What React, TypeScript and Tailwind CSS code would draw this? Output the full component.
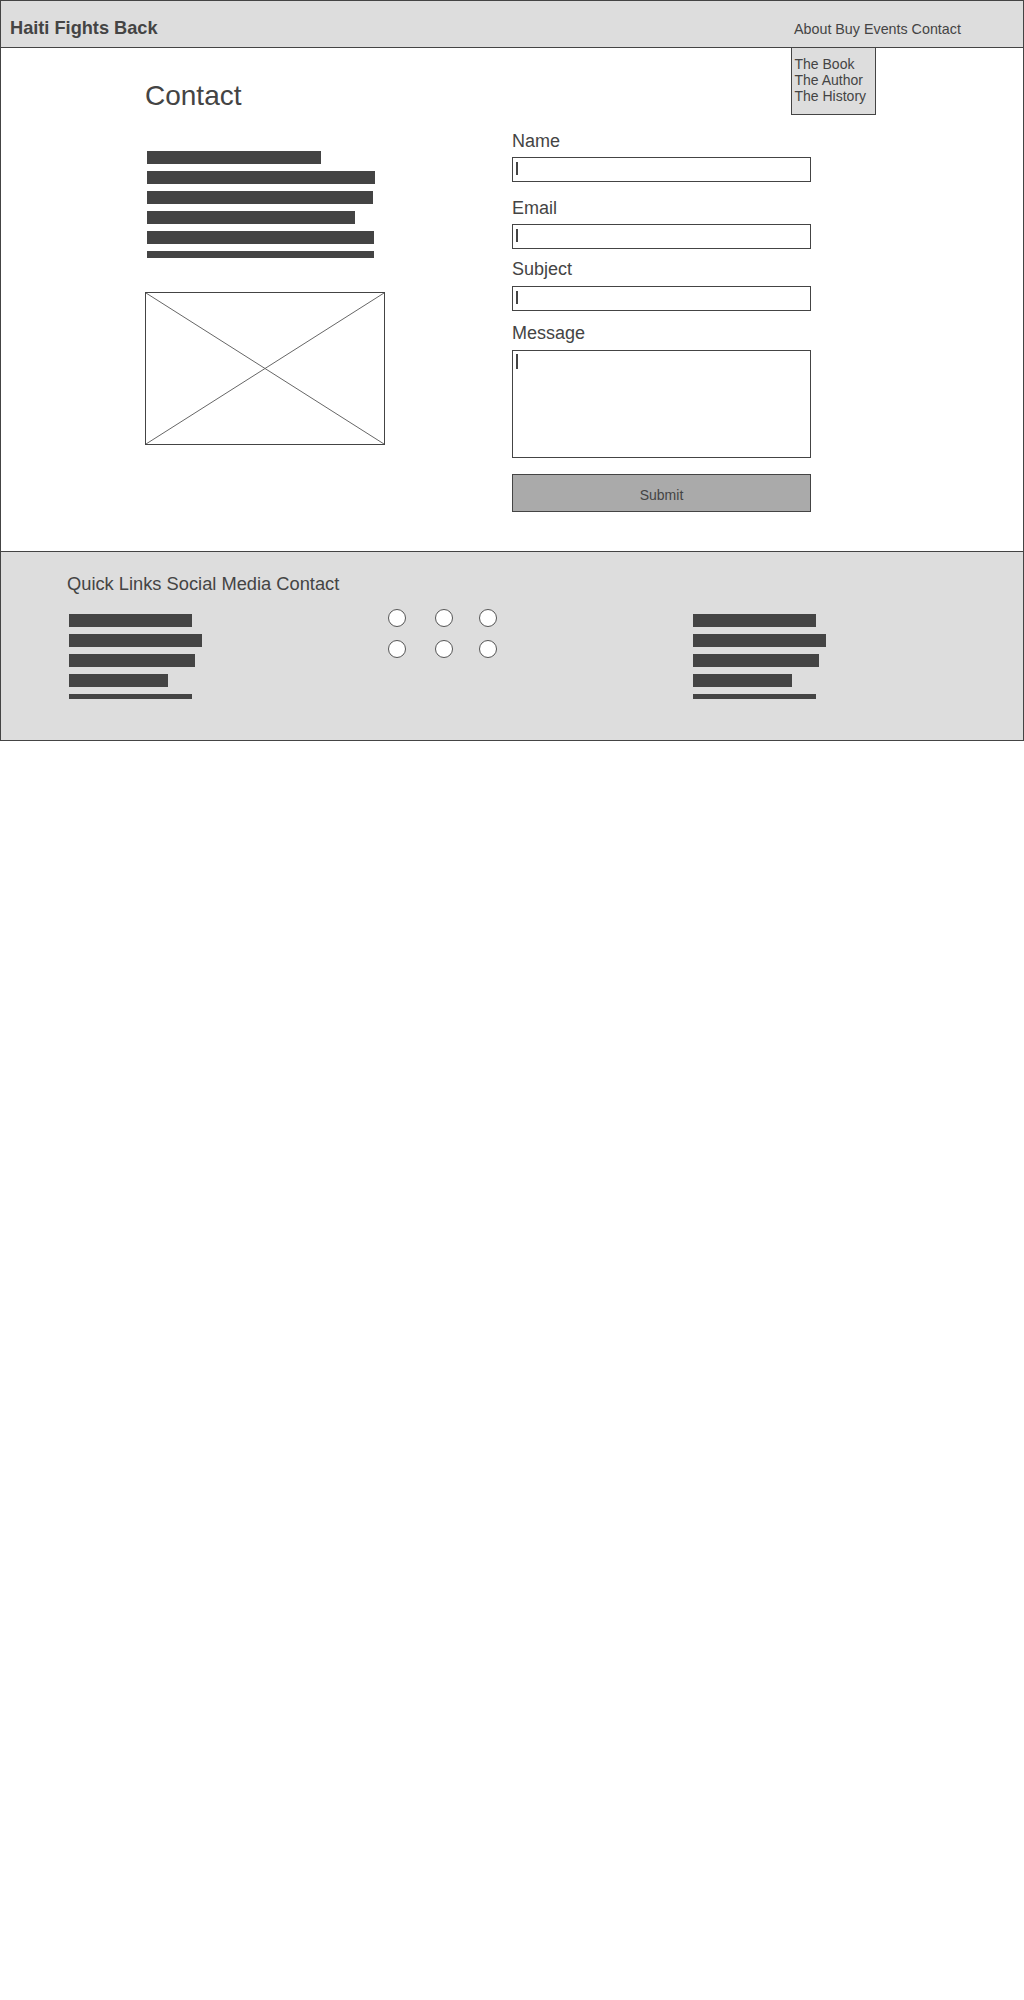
import React from "react";

const NAV = ["About", "Buy", "Events", "Contact"];
const SUBMENU = ["The Book", "The Author", "The History"];
const INTRO_BARS = [174, 228, 226, 208, 227];
const FOOTER_BARS = [123, 133, 126, 99];

const Caret = ({ tall = false }: { tall?: boolean }) => (
  <span className={`block w-[1.5px] bg-[#444] ${tall ? "h-[15px]" : "h-[13px]"}`} />
);

const Field = ({ label, className, inputClass }: { label: string; className: string; inputClass: string }) => (
  <>
    <label className={`text-[18px] leading-[21px] ${className}`}>{label}</label>
    <div className={`h-[25px] border border-[#444] bg-white pt-[4px] pl-[3px] ${inputClass}`}>
      <Caret />
    </div>
  </>
);

const BarList = ({ widths, last }: { widths: number[]; last: number }) => (
  <div className="flex flex-col gap-[7px]">
    {widths.map((w, i) => (
      <div key={i} className="h-[13px] bg-[#444]" style={{ width: w }} />
    ))}
    <div className="h-[5px] bg-[#444]" style={{ width: last }} />
  </div>
);

export default function App() {
  return (
    <div className="w-[1024px] border border-[#444] bg-white text-[#444] font-['Liberation_Sans',Arial,sans-serif]">
      {/* Header */}
      <header className="relative h-[47px] border-b border-[#444] bg-[#ddd] flex items-baseline pt-[17px]">
        <div className="w-[790px] shrink-0 pl-[9px] text-[18.2px] font-bold leading-[21px]">Haiti Fights Back</div>
        <nav className="pl-[3px] text-[14.3px] leading-[16px]">{NAV.join(" ")}</nav>

        {/* dropdown under the nav */}
        <div className="absolute left-[790px] top-[46px] z-10 w-[85px] h-[68px] border border-[#444] bg-[#ddd] pt-[8px] pl-[2.5px] text-[14px] leading-[16px]">
          {SUBMENU.map((s) => (
            <div key={s}>{s}</div>
          ))}
        </div>
      </header>

      {/* Main */}
      <main className="flex items-start pl-[144px] pt-[32px] pb-[39px]">
        <div className="w-[367px] shrink-0">
          <h1 className="text-[28px] leading-[32px]">Contact</h1>
          <div className="mt-[39px] pl-[2px] flex flex-col gap-[7px]">
            {INTRO_BARS.map((w, i) => (
              <div key={i} className="h-[13px] bg-[#444]" style={{ width: w }} />
            ))}
            <div className="h-[7px] w-[227px] bg-[#444]" />
          </div>
          <div className="mt-[34px] w-[240px] h-[153px] border border-[#444]">
            <svg width="100%" height="100%" viewBox="0 0 238 151" preserveAspectRatio="none">
              <line x1="0" y1="0" x2="238" y2="151" stroke="#666" strokeWidth="1" />
              <line x1="238" y1="0" x2="0" y2="151" stroke="#666" strokeWidth="1" />
            </svg>
          </div>
        </div>

        <form className="w-[299px] mt-[51px] flex flex-col">
          <Field label="Name" className="" inputClass="mt-[5px]" />
          <Field label="Email" className="mt-[16px]" inputClass="mt-[5px]" />
          <Field label="Subject" className="mt-[10px]" inputClass="mt-[6px]" />
          <label className="mt-[12px] text-[18px] leading-[21px]">Message</label>
          <div className="mt-[6px] h-[108px] border border-[#444] bg-white pt-[3px] pl-[3px]">
            <Caret tall />
          </div>
          <button
            type="button"
            className="mt-[16px] h-[38px] border border-[#444] bg-[#aaa] pt-[4px] flex items-center justify-center text-[14px] leading-[16px] text-[#444]"
          >
            Submit
          </button>
        </form>
      </main>

      {/* Footer */}
      <footer className="border-t border-[#444] bg-[#ddd] pt-[21px] pb-[41px]">
        <div className="pl-[66px] text-[18.3px] leading-[21px]">Quick Links Social Media Contact</div>
        <div className="mt-[15px] flex items-start">
          <div className="w-[387px] shrink-0 pl-[68px] pt-[5px]">
            <BarList widths={FOOTER_BARS} last={123} />
          </div>
          <div className="w-[305px] shrink-0 flex flex-col gap-[13px]">
            {[0, 1].map((r) => (
              <div key={r} className="flex">
                <span className="w-[18px] h-[18px] rounded-full border border-[#555] bg-white" />
                <span className="ml-[29px] w-[18px] h-[18px] rounded-full border border-[#555] bg-white" />
                <span className="ml-[26px] w-[18px] h-[18px] rounded-full border border-[#555] bg-white" />
              </div>
            ))}
          </div>
          <div className="pt-[5px]">
            <BarList widths={FOOTER_BARS} last={123} />
          </div>
        </div>
      </footer>
    </div>
  );
}
